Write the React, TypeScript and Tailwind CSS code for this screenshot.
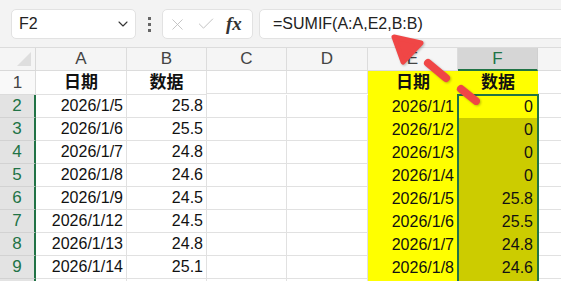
import { ChevronDown, X, Check } from 'lucide-react';

const cols = ['A', 'B', 'C', 'D', 'E', 'F', ''];

const rows = [
  { a: '日期', b: '数据', e: '日期', f: '数据', head: true },
  { a: '2026/1/5', b: '25.8', e: '2026/1/1', f: '0' },
  { a: '2026/1/6', b: '25.5', e: '2026/1/2', f: '0' },
  { a: '2026/1/7', b: '24.8', e: '2026/1/3', f: '0' },
  { a: '2026/1/8', b: '24.6', e: '2026/1/4', f: '0' },
  { a: '2026/1/9', b: '24.5', e: '2026/1/5', f: '25.8' },
  { a: '2026/1/12', b: '24.5', e: '2026/1/6', f: '25.5' },
  { a: '2026/1/13', b: '24.8', e: '2026/1/7', f: '24.8' },
  { a: '2026/1/14', b: '25.1', e: '2026/1/8', f: '24.6' },
  { a: '', b: '', e: '', f: '' },
];

const font = { fontFamily: '"Liberation Sans", "Noto Sans CJK SC", sans-serif' };

const Cell = ({ children, head }: { children?: React.ReactNode; head?: boolean }) => (
  <div
    className={
      'border-r border-b border-[#e1e1e1] bg-white flex items-center ' +
      (head ? 'h-[24px] justify-center font-bold text-[17px]' : 'h-[23px] justify-end pr-[3px] text-[16px]')
    }
  >
    {children}
  </div>
);

export default function App() {
  return (
    <div className="w-[561px] h-[281px] overflow-hidden bg-white relative text-[#111]" style={font}>
      {/* formula bar */}
      <div className="h-[48px] bg-[#f3f3f3] flex items-start pt-[9px] pl-[11px] border-b border-[#dcdcdc]">
        <div className="w-[125px] h-[30px] bg-white border border-[#e2e2e2] rounded-[5px] flex items-center justify-between pl-[7px] pr-[4px]">
          <span className="text-[16px] text-[#222]">F2</span>
          <ChevronDown size={16} strokeWidth={1.6} className="text-[#333]" />
        </div>
        <div className="w-[26px] h-[30px] flex flex-col items-center justify-center gap-[3px]">
          <div className="w-[3px] h-[3px] bg-[#666]" />
          <div className="w-[3px] h-[3px] bg-[#666]" />
          <div className="w-[3px] h-[3px] bg-[#666]" />
        </div>
        <div className="w-[91px] h-[30px] bg-white border border-[#e2e2e2] rounded-[5px] flex items-center pl-[5px] gap-[9px]">
          <X size={19} strokeWidth={1.1} className="text-[#bdbdbd]" />
          <Check size={20} strokeWidth={1.1} className="text-[#bdbdbd]" />
          <span
            className="italic font-bold text-[19px] text-[#333] ml-[1px]"
            style={{ fontFamily: '"Liberation Serif", "DejaVu Serif", serif' }}
          >
            fx
          </span>
        </div>
        <div className="ml-[6px] flex-1 -mr-[10px] h-[30px] bg-white border border-[#e2e2e2] rounded-[5px] flex items-center pl-[13px]">
          <span className="text-[16px] text-[#222]">=SUMIF(A:A,E2,B:B)</span>
        </div>
      </div>

      {/* grid */}
      <div className="relative">
        <div className="grid grid-cols-[36px_91px_80px_80px_81px_90px_80px_60px]">
          {/* header row */}
          <div className="h-[23px] bg-[#f5f5f5] border-r border-b border-[#d9d9d9] relative">
            <div className="absolute right-[4px] bottom-[4px] w-0 h-0 border-l-[14px] border-l-transparent border-b-[14px] border-b-[#dedede]" />
          </div>
          {cols.map((c, i) =>
            c === 'F' ? (
              <div
                key={i}
                className="h-[23px] bg-[#d6d6d6] border-r border-[#d0d0d0] border-b-2 border-b-[#217346] flex items-center justify-center text-[17px] text-[#217346]"
              >
                {c}
              </div>
            ) : (
              <div
                key={i}
                className="h-[23px] bg-[#f5f5f5] border-r border-b border-[#dcdcdc] flex items-center justify-center text-[17px] text-[#444]"
              >
                {c}
              </div>
            )
          )}

          {rows.map((r, i) => {
            const n = i + 1;
            const sel = n >= 2;
            const h = r.head ? 'h-[24px] ' : 'h-[23px] ';
            return [
              <div
                key={'h' + n}
                className={
                  h +
                  'border-b flex items-center justify-center text-[17px] ' +
                  (sel
                    ? 'bg-[#e3e3e3] border-b-[#d2d2d2] text-[#217346] border-r-2 border-r-[#217346]'
                    : 'bg-[#f9f9f9] border-b-[#dcdcdc] text-[#444] border-r border-r-[#dcdcdc]')
                }
              >
                {n <= 9 ? n : ''}
              </div>,
              <Cell key={'a' + n} head={r.head}>{r.a}</Cell>,
              <Cell key={'b' + n} head={r.head}>{r.b}</Cell>,
              <Cell key={'c' + n} />,
              <Cell key={'d' + n} />,
              <div
                key={'e' + n}
                className={
                  h +
                  'flex items-center bg-[#ffff00] ' +
                  (r.head ? 'justify-center font-bold text-[17px]' : 'justify-end pr-[4px] text-[16px]')
                }
              >
                {r.e}
              </div>,
              <div
                key={'f' + n}
                className={
                  h +
                  'flex items-center ' +
                  (n <= 2 ? 'bg-[#ffff00] ' : 'bg-[#cccc00] ') +
                  (r.head ? 'justify-center font-bold text-[17px]' : 'justify-end pr-[5px] text-[16px]')
                }
              >
                {r.f}
              </div>,
              <Cell key={'g' + n} />,
            ];
          })}
        </div>

        {/* selection outline from F2 down */}
        <div className="absolute left-[457px] top-[46px] w-[82px] h-[200px] border-2 border-[#217346] pointer-events-none" />
      </div>

      {/* annotation arrow */}
      <svg className="absolute inset-0 pointer-events-none" width="561" height="281" viewBox="0 0 561 281">
        <g
          stroke="#f04646"
          strokeWidth="8"
          strokeLinecap="round"
          strokeLinejoin="round"
          fill="#f04646"
          style={{ filter: 'drop-shadow(1px 1px 1px rgba(0,0,0,0.25))' }}
        >
          <polygon points="394,37 421,43 403,62" strokeWidth="5" />
          <line x1="428" y1="63" x2="446" y2="78" />
          <line x1="461" y1="89" x2="476" y2="101" />
        </g>
      </svg>
    </div>
  );
}
